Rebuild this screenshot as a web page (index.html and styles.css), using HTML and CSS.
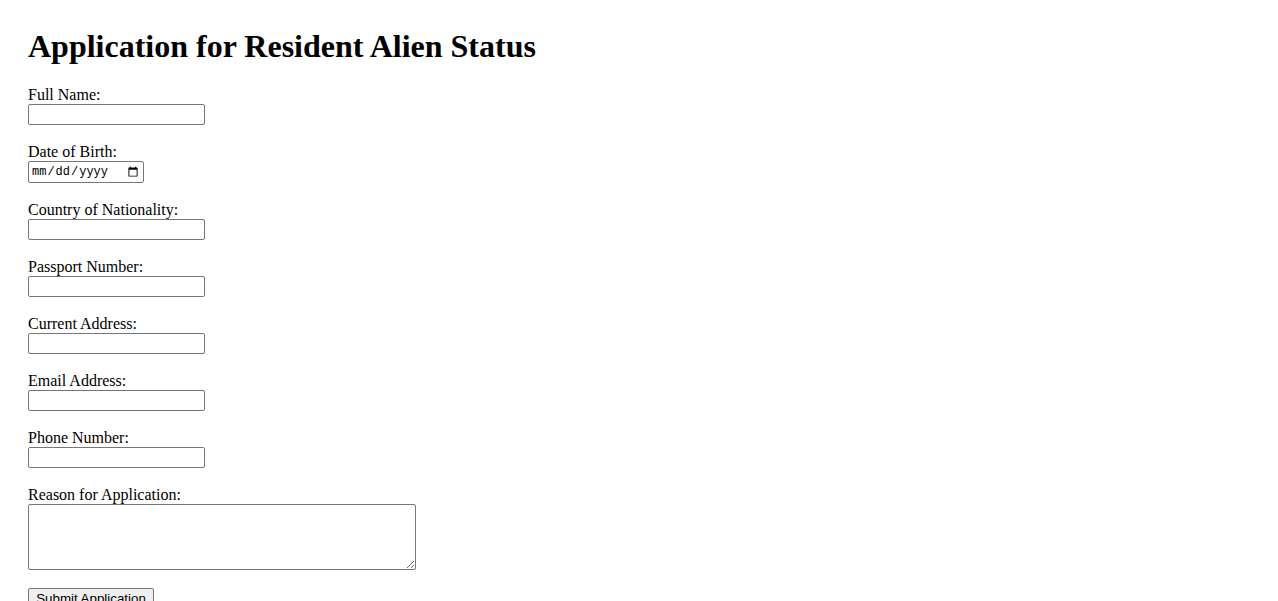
FILE: index.html
```html
<!DOCTYPE html>
<html lang="en">
<head>
<meta charset="utf-8">
<title>Application for Resident Alien Status</title>
<link rel="stylesheet" href="styles.css">
</head>
<body>
<h1 class="title">Application for Resident Alien Status</h1>
<form class="form">
  <div class="group">
    <label class="label" for="name">Full Name:</label>
    <input class="field" type="text" id="name">
  </div>
  <div class="group">
    <label class="label" for="dob">Date of Birth:</label>
    <input class="field date" type="date" id="dob">
  </div>
  <div class="group">
    <label class="label" for="country">Country of Nationality:</label>
    <input class="field" type="text" id="country">
  </div>
  <div class="group">
    <label class="label" for="passport">Passport Number:</label>
    <input class="field" type="text" id="passport">
  </div>
  <div class="group">
    <label class="label" for="address">Current Address:</label>
    <input class="field" type="text" id="address">
  </div>
  <div class="group">
    <label class="label" for="email">Email Address:</label>
    <input class="field" type="email" id="email">
  </div>
  <div class="group">
    <label class="label" for="phone">Phone Number:</label>
    <input class="field" type="tel" id="phone">
  </div>
  <div class="group">
    <label class="label" for="reason">Reason for Application:</label>
    <textarea class="area" id="reason"></textarea>
  </div>
  <div class="group">
    <button class="submit" type="submit">Submit Application</button>
  </div>
</form>
</body>
</html>
```
FILE: styles.css
```css
html, body {
  margin: 0;
  background: #fff;
}
body {
  padding: 28px;
  font-family: "Liberation Serif", "Times New Roman", serif;
  font-size: 16px;
  color: #000;
}
.title {
  margin: 0 0 21px;
  font-size: 32px;
  line-height: 37px;
  font-weight: bold;
}
.form {
  display: flex;
  flex-direction: column;
  align-items: flex-start;
}
.group {
  display: flex;
  flex-direction: column;
  align-items: flex-start;
  margin-bottom: 18px;
}
.label {
  display: block;
  line-height: 18px;
  height: 18px;
}
.field {
  box-sizing: border-box;
  width: 177px;
  height: 21px;
  margin: 0;
  padding: 1px 2px;
  border: 1px solid #767676;
  border-radius: 2px;
  font-family: "Liberation Sans", Arial, sans-serif;
  font-size: 13.33px;
  background: #fff;
}
.date {
  width: 116px;
  height: 22px;
  font-family: "Liberation Mono", "Courier New", monospace;
  font-size: 12px;
  color: #000;
}
.area {
  box-sizing: border-box;
  width: 388px;
  height: 66px;
  margin: 0;
  padding: 2px;
  border: 1px solid #767676;
  border-radius: 2px;
  font-family: "Liberation Mono", monospace;
  font-size: 13.33px;
}
.submit {
  box-sizing: border-box;
  width: 126px;
  height: 22px;
  margin: 0;
  padding: 1px 6px;
  border: 1px solid #767676;
  border-radius: 2px;
  background: #efefef;
  font-family: "Liberation Sans", Arial, sans-serif;
  font-size: 13.33px;
  color: #000;
  line-height: 18px;
}
```
